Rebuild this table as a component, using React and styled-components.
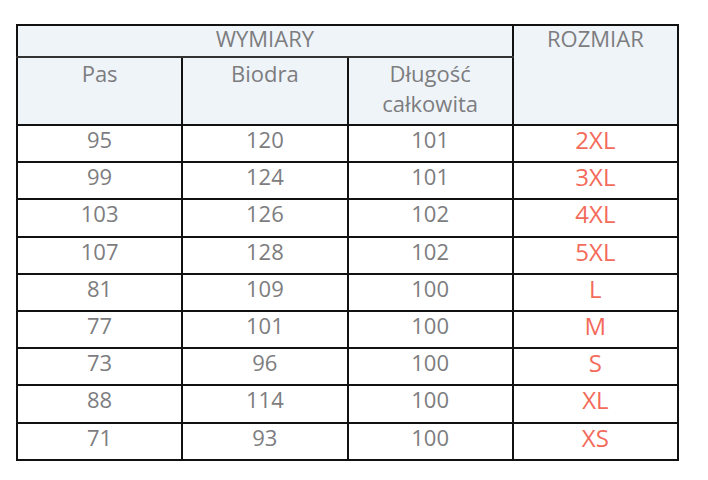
import React from "react";
import styled, { createGlobalStyle } from "styled-components";

const GlobalStyle = createGlobalStyle`
  body {
    margin: 0;
    background: #ffffff;
    font-family: "Open Sans", "Liberation Sans", sans-serif;
  }
`;

const Page = styled.div`
  padding: 24px 0 0 16px;
`;

const Table = styled.table`
  border-collapse: collapse;
  border: 2px solid #111;
  table-layout: fixed;
  width: 663px;
`;

const HeadCell = styled.th`
  box-sizing: border-box;
  background: #eff4f9;
  border: 2px solid #111;
  border-bottom-color: ${({ $soft }) => ($soft ? "#333" : "#111")};
  color: #7d7d7f;
  font-weight: 400;
  font-size: 22px;
  line-height: ${({ $lh }) => $lh}px;
  vertical-align: top;
  text-align: center;
  padding: 0;
  height: ${({ $h }) => $h}px;
`;

const Cell = styled.td`
  box-sizing: border-box;
  border: 2px solid #111;
  color: ${({ $size }) => ($size ? "#f36b5b" : "#7d7d7f")};
  font-size: ${({ $size }) => ($size ? 24 : 22)}px;
  line-height: ${({ $size }) => ($size ? 28 : 26)}px;
  text-align: center;
  vertical-align: top;
  padding: 0;
  height: 37.2px;
`;

const rows = [
  [95, 120, 101, "2XL"],
  [99, 124, 101, "3XL"],
  [103, 126, 102, "4XL"],
  [107, 128, 102, "5XL"],
  [81, 109, 100, "L"],
  [77, 101, 100, "M"],
  [73, 96, 100, "S"],
  [88, 114, 100, "XL"],
  [71, 93, 100, "XS"],
];

export default function App() {
  return (
    <Page>
      <GlobalStyle />
      <Table>
        <thead>
          <tr>
            <HeadCell colSpan={3} $h={32} $lh={24} $soft>
              WYMIARY
            </HeadCell>
            <HeadCell rowSpan={2} $lh={24}>
              ROZMIAR
            </HeadCell>
          </tr>
          <tr>
            <HeadCell $h={68} $lh={30}>Pas</HeadCell>
            <HeadCell $h={68} $lh={30}>Biodra</HeadCell>
            <HeadCell $h={68} $lh={30}>
              Długość
              <br />
              całkowita
            </HeadCell>
          </tr>
        </thead>
        <tbody>
          {rows.map((r) => (
            <tr key={r[3]}>
              <Cell>{r[0]}</Cell>
              <Cell>{r[1]}</Cell>
              <Cell>{r[2]}</Cell>
              <Cell $size>{r[3]}</Cell>
            </tr>
          ))}
        </tbody>
      </Table>
    </Page>
  );
}
